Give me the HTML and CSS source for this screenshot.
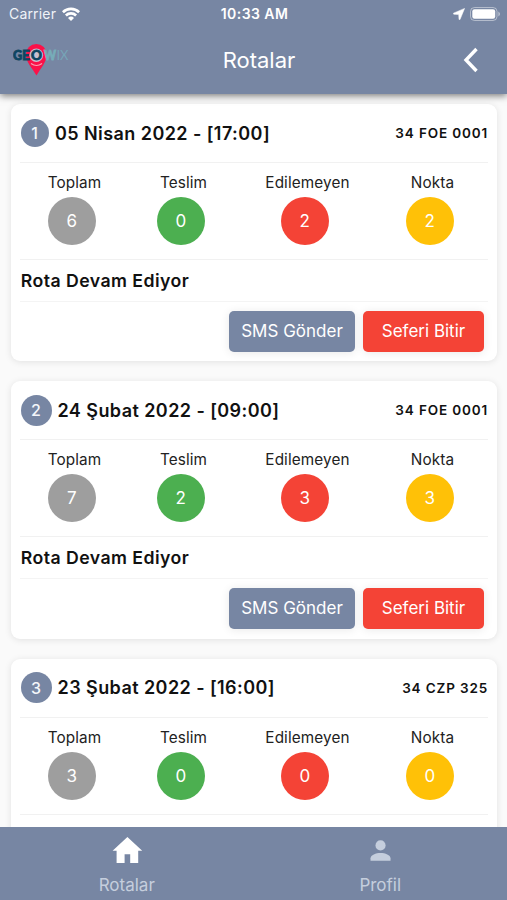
FILE: index.html
```html
<!DOCTYPE html>
<html lang="tr">
<head>
<meta charset="utf-8">
<meta name="viewport" content="width=device-width, initial-scale=1">
<title>Rotalar</title>
<link rel="stylesheet" href="styles.css">
</head>
<body>
<div class="app">
  <header class="header">
    <div class="status">
      <div class="carrier"><span>Carrier</span>
        <svg width="18" height="14" viewBox="0 0 18 14" fill="none" stroke="#fff" stroke-width="2.7"><path d="M.9 5.2a11.6 11.6 0 0 1 16.2 0"/><path d="M3.9 8.5a7.3 7.3 0 0 1 10.2 0"/><path d="M9 13.9 6 10.9a4.3 4.3 0 0 1 6 0z" fill="#fff" stroke="none"/></svg>
      </div>
      <div class="clock">10:33 AM</div>
      <div class="power">
        <svg width="12" height="12" viewBox="0 0 12 12"><path d="M11.6.4.4 5.2l.3 1 5 .3.300 5 1 .1z" fill="#fff" stroke="#fff" stroke-width=".5"/></svg>
        <svg width="31" height="14" viewBox="0 0 31 14"><rect x=".5" y=".5" width="26.5" height="13" rx="4" fill="none" stroke="#fff" stroke-opacity=".45"/><rect x="2.3" y="2.3" width="22.9" height="9.4" rx="2.2" fill="#fff"/><path d="M28.4 4.6q3.2 2.4 0 4.8z" fill="#fff" fill-opacity=".5"/></svg>
      </div>
    </div>
    <div class="appbar">
      <svg class="logo" width="60" height="36" viewBox="0 0 60 36"><path d="M23.500 33.500C19.500 26.500 12.800 20 12.800 12.500a10.500 10.500 0 0 1 21 0C33.800 20 27.500 26.500 23.500 33.500z" fill="#fb1149"/><path d="M18 21.500q5.500 4 11 0" fill="none" stroke="#f6a5b8" stroke-width="1.200"/><circle cx="23.300" cy="13.200" r="6.800" fill="#c9bfd0"/><g font-family="Lato, sans-serif" font-weight="900" font-size="13.500" stroke-width=".8"><text x="0" y="18" fill="#0d4561" stroke="#0d4561" textLength="16.500" lengthAdjust="spacingAndGlyphs">GE</text><text x="18" y="18" fill="#0d4561" stroke="#0d4561" textLength="11" lengthAdjust="spacingAndGlyphs">O</text><text x="31" y="18" fill="#76adb9" stroke="#76adb9" textLength="12" lengthAdjust="spacingAndGlyphs">W</text><text x="43.500" y="18" fill="#76a5b7" font-weight="400" textLength="12" lengthAdjust="spacingAndGlyphs">IX</text></g></svg>
      <h1 class="heading">Rotalar</h1>
      <svg class="back" width="16" height="26" viewBox="0 0 16 26"><path d="M13.500 2 3 13 13.500 24" fill="none" stroke="#fff" stroke-width="3.400"/></svg>
    </div>
  </header>

  <main class="routes">
    <article class="card">
      <div class="top"><span class="num first">1</span><h2 class="date">05 Nisan 2022 - [17:00]</h2><span class="plate">34 FOE 0001</span></div>
      <div class="stats">
        <div class="stat"><span class="label">Toplam</span><span class="dot gray">6</span></div>
        <div class="stat"><span class="label">Teslim</span><span class="dot green">0</span></div>
        <div class="stat"><span class="label">Edilemeyen</span><span class="dot red">2</span></div>
        <div class="stat"><span class="label">Nokta</span><span class="dot amber">2</span></div>
      </div>
      <p class="state">Rota Devam Ediyor</p>
      <div class="actions"><button class="btn sms">SMS Gönder</button><button class="btn end">Seferi Bitir</button></div>
    </article>
    <article class="card">
      <div class="top"><span class="num">2</span><h2 class="date">24 Şubat 2022 - [09:00]</h2><span class="plate">34 FOE 0001</span></div>
      <div class="stats">
        <div class="stat"><span class="label">Toplam</span><span class="dot gray">7</span></div>
        <div class="stat"><span class="label">Teslim</span><span class="dot green">2</span></div>
        <div class="stat"><span class="label">Edilemeyen</span><span class="dot red">3</span></div>
        <div class="stat"><span class="label">Nokta</span><span class="dot amber">3</span></div>
      </div>
      <p class="state">Rota Devam Ediyor</p>
      <div class="actions"><button class="btn sms">SMS Gönder</button><button class="btn end">Seferi Bitir</button></div>
    </article>
    <article class="card">
      <div class="top"><span class="num">3</span><h2 class="date">23 Şubat 2022 - [16:00]</h2><span class="plate">34 CZP 325</span></div>
      <div class="stats">
        <div class="stat"><span class="label">Toplam</span><span class="dot gray">3</span></div>
        <div class="stat"><span class="label">Teslim</span><span class="dot green">0</span></div>
        <div class="stat"><span class="label">Edilemeyen</span><span class="dot red">0</span></div>
        <div class="stat"><span class="label">Nokta</span><span class="dot amber">0</span></div>
      </div>
    </article>
  </main>

  <nav class="nav">
    <div class="tab"><svg width="32" height="32" viewBox="0 0 24 24" fill="#fff"><path d="M10.200 21v-6.500h4.200V21h6v-9.200h3L12.300 1.500 1.200 11.800h3V21z"/></svg><span>Rotalar</span></div>
    <div class="tab"><svg width="32" height="32" viewBox="0 0 24 24" fill="#c5cedd"><circle cx="12.400" cy="7.800" r="3.800"/><path d="M4.900 19.300v-1.800c0-2.500 4.100-4 7.500-4s7.500 1.500 7.500 4v1.800z"/></svg><span>Profil</span></div>
  </nav>
</div>
</body>
</html>
```
FILE: styles.css
```css
* { box-sizing: border-box; margin: 0; }
body { font-family: Inter, "Liberation Sans", sans-serif; color: #111; }
svg { display: block; }
.app { height: 900px; display: flex; flex-direction: column; background: #fafafa; overflow: hidden; }

.header { flex: none; height: 94px; background: #7786a3; color: #fff; box-shadow: 0 2px 7px rgba(0, 0, 0, .5); z-index: 1; }
.status { height: 27px; display: grid; grid-template-columns: 1fr auto 1fr; align-items: center; padding: 0 6px 0 9px; }
.carrier { display: flex; align-items: center; gap: 6px; font-size: 14px; letter-spacing: .18px; color: #f0f3f8; }
.clock { font-size: 14px; font-weight: 600; letter-spacing: .45px; margin-right: 1px; }
.power { display: flex; align-items: center; justify-content: flex-end; gap: 5px; }
.appbar { height: 67px; display: grid; grid-template-columns: 1fr auto 1fr; align-items: center; padding: 0 28px 0 13px; }
.heading { font-size: 22px; font-weight: 400; line-height: 26px; margin: 0 -13px 2px 13px; }
.back { justify-self: end; margin-bottom: 2px; }
.logo { margin-bottom: 2px; }

.routes { flex: 1; min-height: 0; overflow: hidden; display: flex; flex-direction: column; gap: 20px; padding: 10px 10px 0 11px; }
.card { flex: none; height: 257.4px; padding: 0 9px; background: #fff; border-radius: 9px; box-shadow: 0 1px 7px rgba(0, 0, 0, .1); }
.top { height: 59px; display: flex; align-items: center; padding-left: .5px; border-bottom: 1px solid #f1f1f1; }
.num { width: 31px; height: 31px; display: grid; place-items: center; border-radius: 50%; background: #7786a3; color: #f4f6fa; font-size: 16px; font-weight: 500; margin-right: 6px; }
.num.first { width: 28px; height: 28px; margin-right: 6.5px; }
.date { font-size: 18px; font-weight: 600; letter-spacing: .43px; }
.plate { margin-left: auto; font-size: 13.5px; font-weight: 600; letter-spacing: .85px; }
.stats { height: 97px; display: grid; grid-template-columns: 109px 109px 139px 111px; padding-top: 10px; border-bottom: 1px solid #f1f1f1; }
.stat { display: flex; flex-direction: column; align-items: center; }
.label { height: 20px; line-height: 20px; font-size: 15.3px; letter-spacing: .12px; color: #222; }
.dot { width: 48px; height: 48px; margin: 4px 5.5px 0 0; display: grid; place-items: center; border-radius: 50%; color: #fff; font-size: 17px; }
.gray { background: #9e9e9e; }
.green { background: #4caf50; }
.red { background: #f44336; }
.amber { background: #ffc107; }
.state { height: 41.5px; line-height: 41px; padding-left: .7px; font-size: 17.7px; font-weight: 600; letter-spacing: .45px; border-bottom: 1px solid #f4f4f4; }
.actions { display: flex; justify-content: flex-end; gap: 8px; padding: 9px 4px 0 0; }
.btn { height: 41px; padding: 0; border: 0; border-radius: 5px; color: #fff; font: 400 17px Inter, sans-serif; box-shadow: 0 1px 10px rgba(0, 0, 0, .09); }
.sms { width: 126px; background: #7786a3; }
.end { width: 121px; background: #f44336; }

.nav { flex: none; height: 73px; display: grid; grid-template-columns: 1fr 1fr; background: #7786a3; color: #c5cedd; z-index: 1; }
.tab { display: flex; flex-direction: column; align-items: center; padding-top: 8px; font-size: 17px; }
.tab span { margin-top: 7px; line-height: 22px; }
```
